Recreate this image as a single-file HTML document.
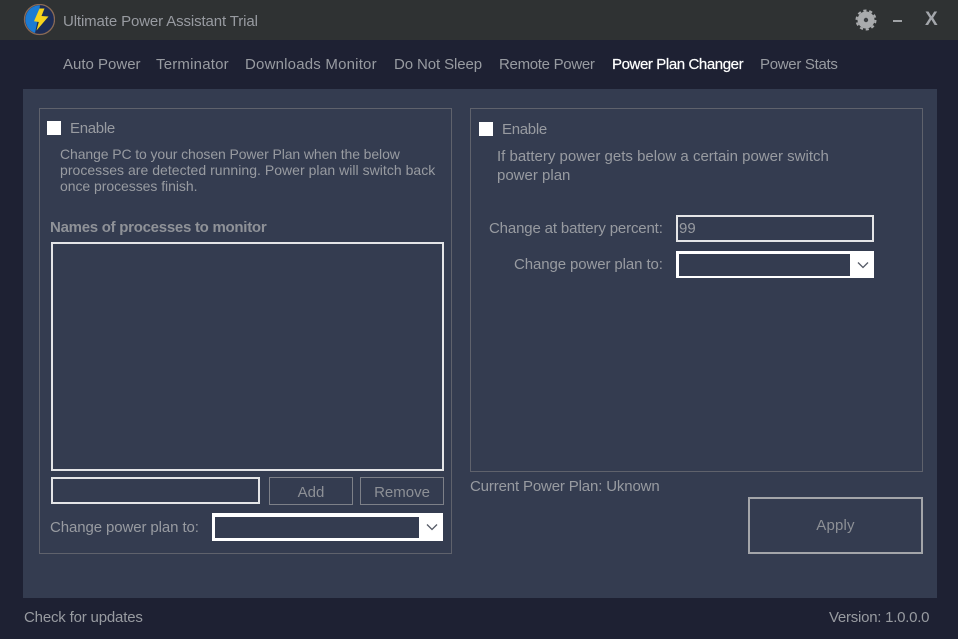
<!DOCTYPE html>
<html>
<head>
<meta charset="utf-8">
<style>
html,body{margin:0;padding:0;width:958px;height:639px;overflow:hidden;background:#1e2133}
body{position:relative;font-family:"Liberation Sans",sans-serif;font-size:15px;color:#989ba1}
.a{position:absolute;box-sizing:border-box}
.t{position:absolute;white-space:nowrap;line-height:18px;height:18px}
.g{position:absolute;box-sizing:border-box;border:1px solid #5f626c}
.i{position:absolute;box-sizing:border-box;border:2px solid #e4e5e7;background:#343c50}
.b{position:absolute;box-sizing:border-box;border:1px solid #7d8088;background:#343c50;text-align:center;line-height:28px;color:#8d9096}
.c{position:absolute;box-sizing:border-box;background:#fff}
.c i{position:absolute;background:#343c50;display:block}
.c svg{position:absolute}
.k{position:absolute;width:14px;height:14px;background:#fff}
.d{font-size:14px}
</style>
</head>
<body>
<div class="a" style="left:0;top:0;width:958px;height:40px;background:#2f3233"></div>
<svg class="a" style="left:23px;top:4px" width="32" height="32" viewBox="0 0 32 32">
<circle cx="16.500" cy="15.500" r="15" fill="#1d2c55" stroke="#8a6a55" stroke-width="1.300"/>
<path d="M17 1.200A14.300 14.300 0 0 0 12 29L15 15Z" fill="#1b7bd3"/>
<path d="M16.500 4.500H21.500L18.500 12L25.500 12.500L13.500 26.500L15.800 18L11 17.300Z" fill="#f6d31c"/>
</svg>
<div class="t" style="left:63px;top:13px;letter-spacing:-.12px">Ultimate Power Assistant Trial</div>

<svg class="a" style="left:855px;top:9px" width="22" height="22" viewBox="0 0 22 22">
<circle cx="11" cy="11" r="8.500" fill="#a9abad"/>
<circle cx="11" cy="11" r="9.500" fill="none" stroke="#a9abad" stroke-width="2" stroke-dasharray="3.200 2.770"/>
<circle cx="11" cy="11" r="2.200" fill="#3a3d40"/>
</svg>
<div class="a" style="left:893px;top:20px;width:9px;height:2px;background:#a0a3a6"></div>
<div class="t" style="left:925px;top:11px;font-size:19px;font-weight:bold;color:#a3a6ab">X</div>

<div class="t" style="left:63px;top:56px">Auto Power</div>
<div class="t" style="left:156px;top:56px;letter-spacing:.2px">Terminator</div>
<div class="t" style="left:245px;top:56px;letter-spacing:.2px">Downloads Monitor</div>
<div class="t" style="left:394px;top:56px;letter-spacing:-.1px">Do Not Sleep</div>
<div class="t" style="left:499px;top:56px;letter-spacing:-.3px">Remote Power</div>
<div class="t" style="left:612px;top:56px;color:#fff;letter-spacing:-.4px;-webkit-text-stroke:.2px #fff">Power Plan Changer</div>
<div class="t" style="left:760px;top:56px;letter-spacing:-.3px">Power Stats</div>

<div class="a" style="left:23px;top:89px;width:914px;height:509px;background:#343c50"></div>

<div class="g" style="left:39px;top:108px;width:413px;height:446px"></div>
<div class="k" style="left:47px;top:121px"></div>
<div class="t" style="left:70px;top:120px;letter-spacing:-.3px">Enable</div>
<div class="t d" style="left:60px;top:145px;letter-spacing:-.1px">Change PC to your chosen Power Plan when the below</div>
<div class="t d" style="left:60px;top:161px;letter-spacing:.03px">processes are detected running. Power plan will switch back</div>
<div class="t d" style="left:60px;top:177px;letter-spacing:-.05px">once processes finish.</div>
<div class="t" style="left:50px;top:219px;font-weight:bold;color:#8f9298;letter-spacing:-.27px">Names of processes to monitor</div>
<div class="i" style="left:51px;top:242px;width:393px;height:229px"></div>
<div class="i" style="left:51px;top:477px;width:209px;height:27px"></div>
<div class="b" style="left:269px;top:477px;width:84px;height:28px;line-height:29px">Add</div>
<div class="b" style="left:360px;top:477px;width:84px;height:28px;line-height:29px">Remove</div>
<div class="t" style="left:50px;top:519px;letter-spacing:-.1px">Change power plan to:</div>
<div class="c" style="left:212px;top:513px;width:231px;height:28px">
<i style="left:3px;top:4px;width:204px;height:21px"></i>
<svg style="left:213px;top:10px" width="14" height="9" viewBox="0 0 14 9"><path d="M2 1.500L7 6.500L12 1.500" fill="none" stroke="#555a66" stroke-width="1.300"/></svg>
</div>

<div class="g" style="left:470px;top:108px;width:453px;height:364px"></div>
<div class="k" style="left:479px;top:122px"></div>
<div class="t" style="left:502px;top:121px;letter-spacing:-.3px">Enable</div>
<div class="t" style="left:497px;top:148px">If battery power gets below a certain power switch</div>
<div class="t" style="left:497px;top:167px">power plan</div>
<div class="t" style="left:489px;top:220px;letter-spacing:-.15px">Change at battery percent:</div>
<div class="i" style="left:676px;top:215px;width:198px;height:27px"></div>
<div class="t" style="left:679px;top:220px">99</div>
<div class="t" style="left:514px;top:256px;letter-spacing:-.1px">Change power plan to:</div>
<div class="c" style="left:676px;top:251px;width:198px;height:27px">
<i style="left:3px;top:3px;width:171px;height:22px"></i>
<svg style="left:180px;top:10px" width="14" height="9" viewBox="0 0 14 9"><path d="M2 1.500L7 6.500L12 1.500" fill="none" stroke="#555a66" stroke-width="1.300"/></svg>
</div>

<div class="t" style="left:470px;top:478px;letter-spacing:-.15px">Current Power Plan: Uknown</div>
<div class="a" style="left:748px;top:497px;width:175px;height:57px;border:2px solid #a3a5a9;text-align:center;line-height:53px;color:#8d9096;letter-spacing:.2px">Apply</div>

<div class="t" style="left:24px;top:609px;letter-spacing:-.18px">Check for updates</div>
<div class="t" style="left:829px;top:609px;letter-spacing:-.25px">Version: 1.0.0.0</div>
</body>
</html>
